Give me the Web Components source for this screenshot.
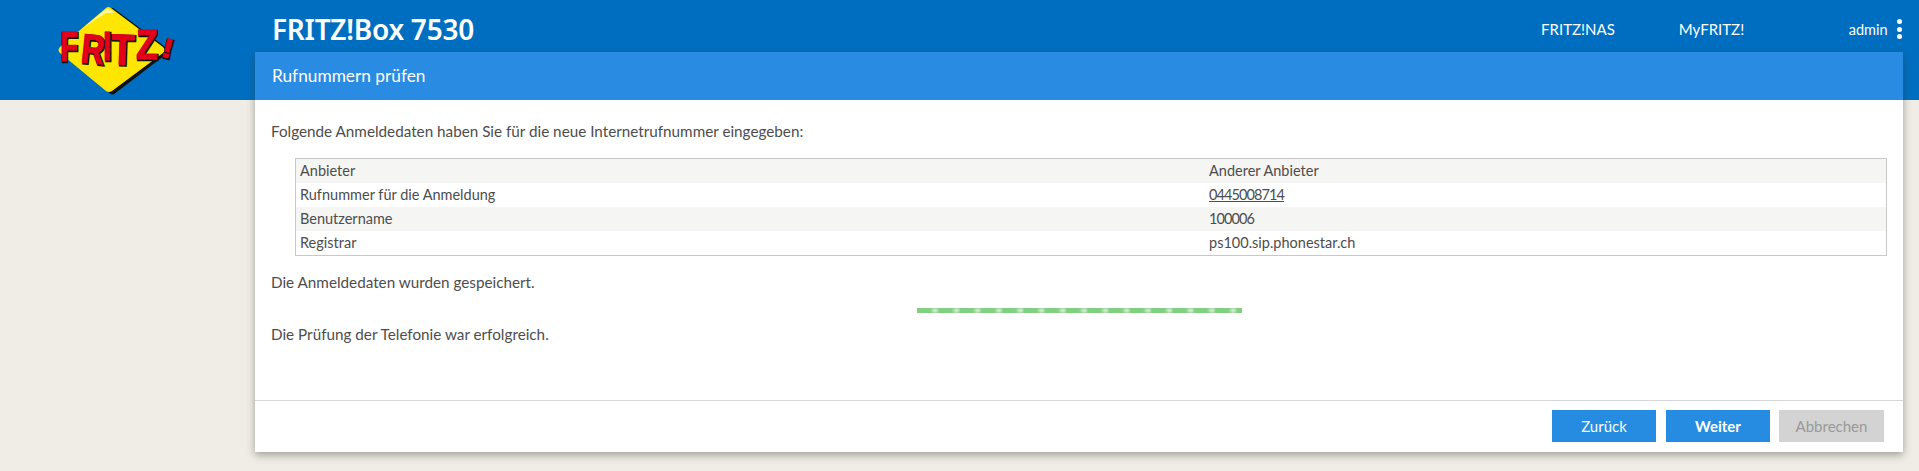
<!DOCTYPE html>
<html lang="de">
<head>
<meta charset="utf-8">
<title>FRITZ!Box 7530</title>
<style>
    html, body { margin: 0; padding: 0; }
    body { background: #f0ede6; font-family: Lato, "Noto Sans", sans-serif; color: #4d4d4d; }
</style>
</head>
<body>
<fritz-page>
    <fritz-logo slot="logo"></fritz-logo>
    <fritz-topbar slot="top" model="FRITZ!Box 7530" user="admin">
        <a>FRITZ!NAS</a>
        <a>MyFRITZ!</a>
    </fritz-topbar>
    <fritz-card heading="Rufnummern prüfen">
        <p class="intro">Folgende Anmeldedaten haben Sie für die neue Internetrufnummer eingegeben:</p>
        <fritz-table>
            <fritz-row label="Anbieter">Anderer Anbieter</fritz-row>
            <fritz-row label="Rufnummer für die Anmeldung"><u style="letter-spacing:-.9px">0445008714</u></fritz-row>
            <fritz-row label="Benutzername"><span style="letter-spacing:-.9px">100006</span></fritz-row>
            <fritz-row label="Registrar">ps100.sip.phonestar.ch</fritz-row>
        </fritz-table>
        <fritz-status saved="Die Anmeldedaten wurden gespeichert." done="Die Prüfung der Telefonie war erfolgreich."></fritz-status>
        <fritz-button slot="actions" back>Zurück</fritz-button>
        <fritz-button slot="actions" strong>Weiter</fritz-button>
        <fritz-button slot="actions" disabled>Abbrechen</fritz-button>
    </fritz-card>
</fritz-page>
<script>
class FritzPage extends HTMLElement {
    constructor() {
        super();
        this.attachShadow({ mode: 'open' }).innerHTML = `
            <style>
                :host {
                    display: grid;
                    grid-template-columns: 255px 1648px;
                    height: 471px;
                    background: linear-gradient(#006ec0 100px, #f0ede6 100px);
                    overflow: hidden;
                }
                .side { display: block; }
                .main { display: flex; flex-direction: column; }
            </style>
            <div class="side"><slot name="logo"></slot></div>
            <div class="main">
                <slot name="top"></slot>
                <slot></slot>
            </div>
        `;
    }
}

class FritzLogo extends HTMLElement {
    constructor() {
        super();
        // each letter of the logo is set on its own, the wordmark is hand-kerned and tilted
        const letter = (ch, x, y, size, rot, sx) => {
            const t = `translate(${x} ${y}) rotate(${rot}) scale(${sx} 1)`;
            return `<text transform="translate(1 1) ${t}" font-size="${size}" fill="#111" stroke="#111" stroke-width="2.6">${ch}</text>
                    <text transform="${t}" font-size="${size}" fill="#e2001a" stroke="#e2001a" stroke-width=".9">${ch}</text>`;
        };
        this.attachShadow({ mode: 'open' }).innerHTML = `
            <style>
                :host { display: block; height: 100px; }
                svg { display: block; }
                text { font-family: "Liberation Sans", sans-serif; font-weight: 700; }
            </style>
            <svg width="200" height="100" viewBox="0 0 200 100">
                <path d="M108 8 Q110 6 113 8 L165 47 Q168 50 165 53 L114 92 Q111 95 108 92 L62 53 Q59 50 62 47 Z" fill="#111" transform="translate(1.5 1)"/>
                <path d="M106 8 Q108 6 111 8 L163 47 Q166 50 163 53 L112 91 Q109 93 106 91 L60 53 Q57 50 60 47 Z" fill="#ffe600"/>
                <path d="M84 27 L106 9.5 Q108 8 110 9.5 L115 13 L106 13 Z" fill="#fff6a0"/>
                ${letter('F', 60, 61, 43, 0, .68)}
                ${letter('R', 80, 62, 41, 6, .78)}
                ${letter('T', 110, 64, 43, 2, .9)}
                ${letter('I', 103, 60, 40, 0, .76)}
                ${letter('Z', 136, 59, 42, 0, .84)}
                ${letter('!', 160, 56, 27, 14, 1.2)}
            </svg>
        `;
    }
}

class FritzTopbar extends HTMLElement {
    constructor() {
        super();
        this.attachShadow({ mode: 'open' }).innerHTML = `
            <style>
                :host {
                    display: flex;
                    align-items: center;
                    box-sizing: border-box;
                    height: 52px;
                    padding: 6px 0 0 17px;
                    color: #fff;
                    font-family: "Noto Sans", sans-serif;
                }
                .model { font-size: 28px; font-weight: 600; letter-spacing: -.25px; flex: 1; white-space: nowrap; }
                nav { display: flex; gap: 64px; margin-right: 104.5px; font-family: Lato, sans-serif; font-size: 15px; }
                .user { display: flex; align-items: center; gap: 9px; font-family: Lato, sans-serif; font-size: 14.5px; margin-right: 1.5px; }
                .dots { display: flex; flex-direction: column; gap: 2.5px; }
                .dots i { width: 5px; height: 5px; border-radius: 50%; background: #fff; }
            </style>
            <div class="model">${this.getAttribute('model')}</div>
            <nav><slot></slot></nav>
            <div class="user">${this.getAttribute('user')}<span class="dots"><i></i><i></i><i></i></span></div>
        `;
    }
}

class FritzCard extends HTMLElement {
    constructor() {
        super();
        this.attachShadow({ mode: 'open' }).innerHTML = `
            <style>
                :host {
                    display: flex;
                    flex-direction: column;
                    height: 400px;
                    background: #fff;
                    box-shadow: 0 3px 8px rgba(60, 60, 50, .45);
                    font-size: 15.25px;
                }
                h2 {
                    margin: 0;
                    height: 48px;
                    line-height: 48px;
                    padding-left: 17px;
                    background: #298ce2;
                    color: #fff;
                    font-size: 17.3px;
                    font-weight: 400;
                }
                .body { flex: 1; padding: 22px 16px 0 16px; }
                footer {
                    display: flex;
                    justify-content: flex-end;
                    gap: 9px;
                    height: 52px;
                    box-sizing: border-box;
                    padding: 9px 19px 0 0;
                    border-top: 1px solid #d6d6d6;
                }
                ::slotted(p) { margin: 0 0 17px 0; line-height: 19px; }
            </style>
            <h2>${this.getAttribute('heading')}</h2>
            <div class="body"><slot></slot></div>
            <footer><slot name="actions"></slot></footer>
        `;
    }
}

class FritzTable extends HTMLElement {
    constructor() {
        super();
        this.attachShadow({ mode: 'open' }).innerHTML = `
            <style>
                :host {
                    display: block;
                    margin: 0 0 0 24px;
                    border: 1px solid #c8c8c4;
                }
            </style>
            <slot></slot>
        `;
    }
}

class FritzRow extends HTMLElement {
    constructor() {
        super();
        this.attachShadow({ mode: 'open' }).innerHTML = `
            <style>
                :host {
                    display: grid;
                    grid-template-columns: 909px 1fr;
                    height: 24px;
                    line-height: 24px;
                    padding-left: 4px;
                    font-size: 14.5px;
                }
                :host(:nth-child(odd)) { background: #f5f5f3; }
            </style>
            <div>${this.getAttribute('label')}</div>
            <div><slot></slot></div>
        `;
    }
}

class FritzStatus extends HTMLElement {
    constructor() {
        super();
        this.attachShadow({ mode: 'open' }).innerHTML = `
            <style>
                :host { display: block; padding-top: 17px; }
                div { line-height: 19px; }
                .bar {
                    width: 325px;
                    height: 5px;
                    margin: 16px 0 12px 646px;
                    background:
                        linear-gradient(rgba(150, 190, 150, .6), rgba(150, 190, 150, 0) 40%, rgba(150, 190, 150, 0) 60%, rgba(150, 190, 150, .6)),
                        repeating-linear-gradient(90deg, #78d778 0, #78d778 13px, #d4efd4 18px, #78d778 24px);
                    background-size: auto, 21.3px 100%;
                }
            </style>
            <div>${this.getAttribute('saved')}</div>
            <div class="bar"></div>
            <div>${this.getAttribute('done')}</div>
        `;
    }
}

class FritzButton extends HTMLElement {
    constructor() {
        super();
        this.attachShadow({ mode: 'open' }).innerHTML = `
            <style>
                :host {
                    display: flex;
                    align-items: center;
                    justify-content: center;
                    width: 104px;
                    height: 32px;
                    background: #268ce2;
                    color: #fff;
                    font-size: 15px;
                }
                :host([back]) { margin-right: 1px; }
                :host([strong]) { font-weight: 700; }
                :host([disabled]) { width: 105px; background: #d3d3d3; color: #999; }
            </style>
            <slot></slot>
        `;
    }
}

customElements.define('fritz-page', FritzPage);
customElements.define('fritz-logo', FritzLogo);
customElements.define('fritz-topbar', FritzTopbar);
customElements.define('fritz-card', FritzCard);
customElements.define('fritz-table', FritzTable);
customElements.define('fritz-row', FritzRow);
customElements.define('fritz-status', FritzStatus);
customElements.define('fritz-button', FritzButton);
</script>
</body>
</html>
